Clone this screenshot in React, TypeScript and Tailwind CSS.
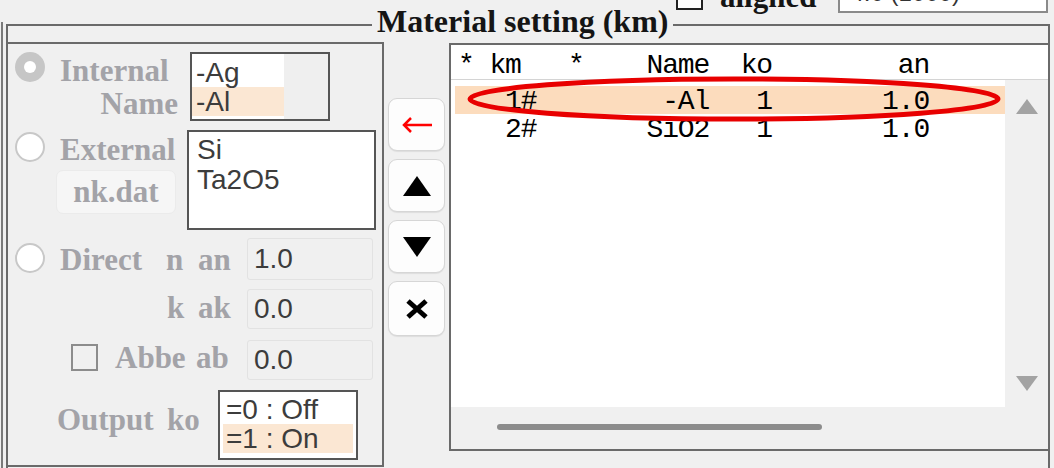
import React from 'react';

const label = "font-bold text-[31px] leading-[33px] text-[#a3a3a8] whitespace-nowrap";
const sans = "font-['Liberation_Sans',sans-serif] text-[28px] text-[#3c3c3c]";

const Radio: React.FC<{ checked?: boolean; className?: string }> = ({ checked, className = '' }) =>
  checked ? (
    <div className={`w-[30px] h-[30px] rounded-full bg-[#c6c6c6] flex items-center justify-center shrink-0 ${className}`}>
      <div className="w-[12px] h-[12px] rounded-full bg-white" />
    </div>
  ) : (
    <div className={`w-[30px] h-[30px] rounded-full border-2 border-[#c8c8c8] bg-white shrink-0 ${className}`} />
  );

const TextBox: React.FC<{ value: string; h: string }> = ({ value, h }) => (
  <div className={`w-[126px] ${h} bg-[#f0f0f0] border border-[#e2e2e2] rounded-[3px] pl-[6px] flex items-center ${sans}`}>
    <span className="leading-[30px]">{value}</span>
  </div>
);

const ToolButton: React.FC<{ children: React.ReactNode; tall?: boolean }> = ({ children, tall }) => (
  <button
    type="button"
    className={`w-[57px] ${tall ? 'h-[55px]' : 'h-[53px]'} bg-[#fdfdfd] border border-[#d6d6d6] rounded-[9px] shadow-[0_1px_1px_rgba(0,0,0,0.08)] flex items-center justify-center`}
  >
    {children}
  </button>
);

export default function App() {
  const header = '* km   *    Name  ko        an';
  const rows = [
    { text: '   1#        -Al   1       1.0', selected: true },
    { text: '   2#       SiO2   1       1.0', selected: false },
  ];

  return (
    <div className="w-[1054px] h-[468px] overflow-hidden bg-[#f0f0f0] flex flex-col font-['Liberation_Serif',serif]">
      {/* controls above the group, cut by the window top */}
      <div className="h-[22px] shrink-0 flex items-start">
        <div className="ml-[676px] -mt-[17px] w-[27px] h-[27px] border-2 border-[#222] bg-white" />
        <span className="ml-[17px] -mt-[19px] text-[31px] leading-[31px] font-bold text-[#151515]">aligned</span>
        <div className="ml-[22px] -mt-[27px] w-[210px] h-[40px] border-2 border-[#8a8a8a] bg-white pl-[10px] font-['Liberation_Sans',sans-serif] text-[24px] leading-[36px] text-[#333]">
          4.0 (1000)
        </div>
      </div>

      <div className="flex-1 flex ml-[1px] border-l-2 border-[#7a7a7a]">
        <div className="flex-1 mt-[2px] mr-[4px] ml-[3px] flex flex-col border-t-2 border-l-2 border-r-2 border-[#6a6a6a]">
          <div className="self-start ml-[364px] -mt-[21px] px-[5px] bg-[#f0f0f0] text-[32px] leading-[32px] font-bold text-[#151515] whitespace-nowrap">
            Material setting (km)
          </div>

          <div className="mt-[5px] flex items-start">
            {/* left panel */}
            <div className="w-[376px] h-[425px] border-t-2 border-r-2 border-b-2 border-[#6a6a6a] flex flex-col">
              {/* Internal */}
              <div className="mt-[8px] flex items-start">
                <Radio checked className="ml-[7px]" />
                <div className="ml-[15px] mt-[2px] w-[118px] flex flex-col">
                  <span className={label}>Internal</span>
                  <span className={`${label} self-end`}>Name</span>
                </div>
                <div className="ml-[12px] w-[140px] h-[69px] border-2 border-[#555] bg-[#efefef] flex">
                  <div className={`w-[92px] bg-white pt-[4px] ${sans}`}>
                    <div className="h-[29px] leading-[29px] pl-[4px]">-Ag</div>
                    <div className="h-[29px] leading-[29px] pl-[4px] bg-[#fbe7d3]">-Al</div>
                  </div>
                </div>
              </div>

              {/* External */}
              <div className="mt-[9px] flex items-start">
                <div className="w-[179px] flex flex-col">
                  <div className="flex items-start">
                    <Radio className="ml-[7px] mt-[2px]" />
                    <span className={`${label} ml-[15px] mt-[3px]`}>External</span>
                  </div>
                  <button
                    type="button"
                    className={`${label} ml-[48px] mt-[4px] w-[120px] h-[44px] rounded-[7px] bg-[#f6f6f6] border border-[#ebebeb] leading-[40px]`}
                  >
                    nk.dat
                  </button>
                </div>
                <div className={`w-[189px] h-[100px] border-2 border-[#555] bg-white pt-[3px] pl-[8px] ${sans}`}>
                  <div className="leading-[30px]">Si</div>
                  <div className="leading-[30px]">Ta2O5</div>
                </div>
              </div>

              {/* Direct n */}
              <div className="mt-[8px] flex items-start">
                <Radio className="ml-[7px] mt-[5px]" />
                <span className={`${label} ml-[15px] mt-[5px] w-[106px]`}>Direct</span>
                <span className={`${label} mt-[5px] w-[32px]`}>n</span>
                <span className={`${label} mt-[5px] w-[49px]`}>an</span>
                <TextBox value="1.0" h="h-[42px]" />
              </div>

              {/* k */}
              <div className="mt-[9px] flex items-start">
                <span className={`${label} ml-[159px] mt-[2px] w-[31px]`}>k</span>
                <span className={`${label} mt-[2px] w-[49px]`}>ak</span>
                <TextBox value="0.0" h="h-[40px]" />
              </div>

              {/* Abbe */}
              <div className="mt-[11px] flex items-start">
                <div className="ml-[63px] mt-[4px] w-[27px] h-[27px] border-2 border-[#8c8c8c]" />
                <span className={`${label} ml-[17px] mt-[1px] w-[81px]`}>Abbe</span>
                <span className={`${label} mt-[1px] w-[51px]`}>ab</span>
                <TextBox value="0.0" h="h-[40px]" />
              </div>

              {/* Output */}
              <div className="mt-[10px] flex items-start">
                <span className={`${label} ml-[49px] mt-[13px] w-[110px]`}>Output</span>
                <span className={`${label} mt-[13px] w-[51px]`}>ko</span>
                <div className={`w-[140px] h-[70px] border-2 border-[#555] bg-white pt-[3px] px-[3px] ${sans}`}>
                  <div className="h-[29px] leading-[29px] pl-[3px]">=0 : Off</div>
                  <div className="h-[29px] leading-[29px] pl-[3px] bg-[#fbe7d3]">=1 : On</div>
                </div>
              </div>
            </div>

            {/* move / delete buttons */}
            <div className="ml-[4px] pt-[56px] flex flex-col gap-[8px]">
              <ToolButton>
                <svg width="32" height="18" viewBox="0 0 32 18">
                  <path d="M31 9H3M10 2L3 9L10 16" fill="none" stroke="#ff0000" strokeWidth="2.5" />
                </svg>
              </ToolButton>
              <ToolButton>
                <svg width="28" height="20" viewBox="0 0 28 20">
                  <path d="M14 0L28 20H0Z" fill="#000" />
                </svg>
              </ToolButton>
              <ToolButton>
                <svg width="28" height="20" viewBox="0 0 28 20">
                  <path d="M0 0H28L14 20Z" fill="#000" />
                </svg>
              </ToolButton>
              <ToolButton tall>
                <svg width="24" height="20" viewBox="0 0 24 20">
                  <path d="M3 2L21 18M21 2L3 18" stroke="#000" strokeWidth="5" />
                </svg>
              </ToolButton>
            </div>

            {/* material table */}
            <div className="ml-[4px] mt-[1px] flex-1 h-[408px] border-t-2 border-l-2 border-b-2 border-[#6a6a6a] flex flex-col">
              <div className="h-[35px] shrink-0 bg-white border-b border-[#d4d4d4] pl-[7px] pt-[7px] font-['Liberation_Mono',monospace] text-[28px] leading-[28px] tracking-[-1.1px] whitespace-pre text-black">
                {header}
              </div>
              <div className="flex-1 flex">
                <div className="relative flex-1 bg-white pt-[6px] pl-[4px] font-['Liberation_Mono',monospace] text-[28px] tracking-[-1.1px] text-black">
                  {rows.map((r) => (
                    <div
                      key={r.text}
                      className={`h-[28px] pl-[3px] pt-[3px] leading-[25px] whitespace-pre ${r.selected ? 'bg-[#fcdcbd]' : ''}`}
                    >
                      {r.text}
                    </div>
                  ))}
                  <svg className="absolute left-[15px] -top-[4px] overflow-visible" width="538" height="48" viewBox="0 0 538 48">
                    <ellipse cx="268" cy="23" rx="264" ry="20" fill="none" stroke="#e80000" strokeWidth="5" />
                  </svg>
                </div>
                <div className="w-[43px] bg-[#f0f0f0] flex flex-col items-center justify-between pt-[19px] pb-[16px]">
                  <svg width="22" height="15" viewBox="0 0 22 15">
                    <path d="M11 0L22 15H0Z" fill="#a3a3a3" />
                  </svg>
                  <svg width="22" height="15" viewBox="0 0 22 15">
                    <path d="M0 0H22L11 15Z" fill="#a3a3a3" />
                  </svg>
                </div>
              </div>
              <div className="h-[42px] shrink-0 bg-[#f0f0f0] pl-[46px] pt-[17px]">
                <div className="w-[325px] h-[6px] rounded-full bg-[#8c8c8c]" />
              </div>
            </div>
          </div>
        </div>
      </div>
    </div>
  );
}
